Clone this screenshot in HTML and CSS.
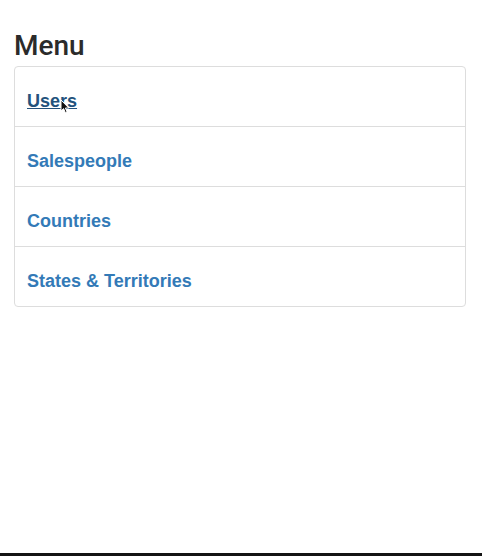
FILE: index.html
```html
<!DOCTYPE html>
<html>
<head>
<meta charset="utf-8">
<link rel="stylesheet" href="styles.css">
</head>
<body>
<div class="page">
  <main class="content">
    <h1 class="title">Menu</h1>
    <div class="list-group">
      <div class="list-item hovered">
        <a class="link" href="#">Users</a>
        <svg class="cursor" width="10" height="15" viewBox="0 0 10 15"><path d="M1 1 L1 12 L3.6 9.6 L5.4 13.8 L7.1 13.1 L5.4 9 L8.8 9 Z" fill="#111" stroke="#fff" stroke-width="1" stroke-linejoin="round"/></svg>
      </div>
      <div class="list-item"><a class="link" href="#">Salespeople</a></div>
      <div class="list-item"><a class="link" href="#">Countries</a></div>
      <div class="list-item"><a class="link" href="#">States &amp; Territories</a></div>
    </div>
  </main>
  <div class="bottom-bar"></div>
</div>
</body>
</html>
```

FILE: styles.css
```css
html, body {
  margin: 0;
  padding: 0;
  background: #fff;
}
body {
  font-family: "Liberation Sans", Arial, Helvetica, sans-serif;
  color: #333;
}
.page {
  display: flex;
  flex-direction: column;
  height: 100vh;
}
.content {
  flex: 1;
  padding: 0 16px 0 14px;
}
.title {
  margin: 30px 0 5px;
  font-family: Roboto, "Liberation Sans", Arial, sans-serif;
  font-size: 28px;
  line-height: 31px;
  font-weight: 500;
  color: #2b2b2b;
}
.list-group {
  border: 1px solid #ddd;
  border-radius: 4px;
}
.list-item {
  position: relative;
  padding: 24px 12px 15px;
  line-height: 20px;
  font-size: 18px;
  font-weight: 700;
}
.list-item + .list-item {
  border-top: 1px solid #ddd;
}
.link {
  color: #337ab7;
  text-decoration: none;
}
.hovered .link {
  color: #23527c;
  text-decoration: underline;
}
.cursor {
  position: absolute;
  left: 45px;
  top: 32px;
}
.bottom-bar {
  height: 3px;
  background: #141414;
}
```
